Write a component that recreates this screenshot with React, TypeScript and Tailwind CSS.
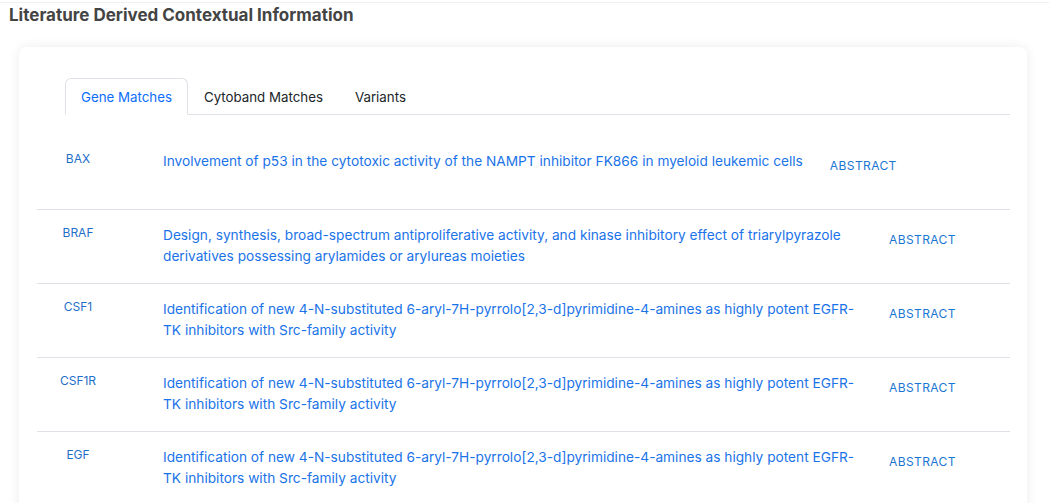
import React from 'react';

const rows = [
  {
    gene: 'BAX',
    title: 'Involvement of p53 in the cytotoxic activity of the NAMPT inhibitor FK866 in myeloid leukemic cells',
    single: true,
  },
  {
    gene: 'BRAF',
    title:
      'Design, synthesis, broad-spectrum antiproliferative activity, and kinase inhibitory effect of triarylpyrazole derivatives possessing arylamides or arylureas moieties',
  },
  {
    gene: 'CSF1',
    title:
      'Identification of new 4-N-substituted 6-aryl-7H-pyrrolo[2,3-d]pyrimidine-4-amines as highly potent EGFR-TK inhibitors with Src-family activity',
  },
  {
    gene: 'CSF1R',
    title:
      'Identification of new 4-N-substituted 6-aryl-7H-pyrrolo[2,3-d]pyrimidine-4-amines as highly potent EGFR-TK inhibitors with Src-family activity',
  },
  {
    gene: 'EGF',
    title:
      'Identification of new 4-N-substituted 6-aryl-7H-pyrrolo[2,3-d]pyrimidine-4-amines as highly potent EGFR-TK inhibitors with Src-family activity',
  },
];

const tabs = ['Gene Matches', 'Cytoband Matches', 'Variants'];

const App = () => {
  return (
    <div className="min-h-screen bg-white font-['Inter','Liberation_Sans',sans-serif]">
      <div className="h-[3px] border-b border-[#f0f0f0]" />

      {/* heading */}
      <h2 className="pl-[9px] text-[17px] leading-[24px] font-bold text-[#444]">
        Literature Derived Contextual Information
      </h2>

      {/* card */}
      <div className="ml-[19px] mr-[22px] mt-[20px] rounded-lg bg-white shadow-[0_0_12px_rgba(0,0,0,0.08)] pl-[18px] pr-[17px] pt-[31px] pb-6">
        <ul className="ml-[28px] flex border-b border-[#dee2e6]">
          {tabs.map((t, i) => (
            <li
              key={t}
              className={
                i === 0
                  ? '-mb-px h-[37px] rounded-t-md border border-[#dee2e6] border-b-white bg-white px-[15px] pt-px text-[13.3px] leading-[35px] text-[#0d6efd]'
                  : '-mb-px h-[37px] border border-transparent px-[15px] pt-px text-[13.3px] leading-[35px] text-[#212529]'
              }
            >
              {t}
            </li>
          ))}
        </ul>

        {rows.map((r) => (
          <div
            key={r.gene}
            className={
              r.single
                ? 'flex items-start border-b border-[#dee2e6] pt-[21px] pb-[37px]'
                : 'flex items-start border-b border-[#dee2e6] pb-[16px]'
            }
          >
            <div className="w-[82px] shrink-0 pt-[14px] text-center text-[12px] leading-[18px] text-[#1f6fc8]">
              {r.gene}
            </div>
            <div
              className={
                r.single
                  ? 'ml-[44px] pt-[15px] text-[13.7px] leading-[21px] text-[#1a73e8]'
                  : 'ml-[44px] w-[700px] shrink-0 pt-[15px] text-[13.7px] leading-[21px] text-[#1a73e8]'
              }
            >
              {r.title}
            </div>
            <div
              className={
                r.single
                  ? 'ml-[27px] h-[36px] shrink-0 pt-[23px] text-[12px] leading-[13px] tracking-[0.4px] text-[#1976d2]'
                  : 'ml-[26px] h-[36px] shrink-0 pt-[23px] text-[12px] leading-[13px] tracking-[0.4px] text-[#1976d2]'
              }
            >
              ABSTRACT
            </div>
          </div>
        ))}
      </div>
    </div>
  );
};

export default App;
